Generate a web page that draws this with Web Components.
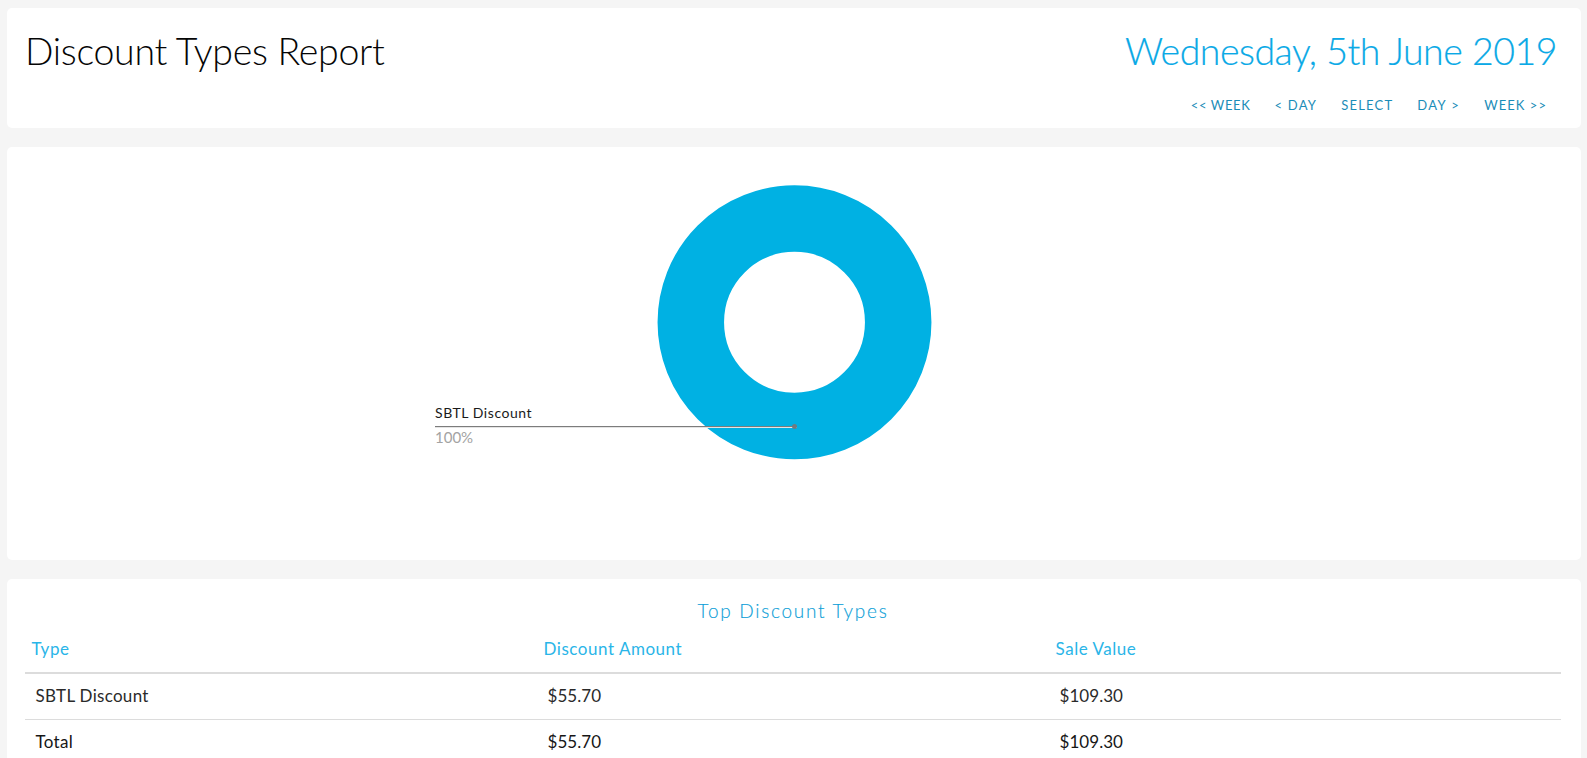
<!DOCTYPE html>
<html lang="en"><head><meta charset="utf-8"><title>Discount Types Report</title>
<style>
html,body{margin:0;height:100%;overflow:hidden;background:#f5f5f5}
body{font-family:Lato,"Liberation Sans",sans-serif;color:#111;box-sizing:border-box;padding:8px 6px 0 7px}
</style></head><body>
<report-page>
  <report-card style="height:120px">
    <report-header title-text="Discount Types Report" date-text="Wednesday, 5th June 2019">
      <nav-link style="letter-spacing:.62px">&lt;&lt; WEEK</nav-link><nav-link style="letter-spacing:1.25px">&lt; DAY</nav-link><nav-link style="letter-spacing:1.2px">SELECT</nav-link><nav-link style="letter-spacing:1.4px">DAY &gt;</nav-link><nav-link>WEEK &gt;&gt;</nav-link>
    </report-header>
  </report-card>
  <report-card style="height:413px"><donut-chart label="SBTL Discount" pct="100%"></donut-chart></report-card>
  <report-card><discount-table></discount-table></report-card>
</report-page>
<script>
function def(name,html,init){customElements.define(name,class extends HTMLElement{
  constructor(){super();this.attachShadow({mode:'open'}).innerHTML=html;}
  connectedCallback(){if(init)init(this);}
});}
def('report-page',`<style>:host{display:flex;flex-direction:column;gap:19px}</style><slot></slot>`);
def('report-card',`<style>:host{display:block;background:#fff;border-radius:5px;box-sizing:border-box;flex:none}</style><slot></slot>`);
def('nav-link',`<style>:host{display:block;font-size:13px;letter-spacing:1.03px;color:#1b8db8;white-space:nowrap;line-height:16px}</style><slot></slot>`);
def('report-header',`<style>
:host{display:flex;justify-content:space-between;align-items:flex-start;height:100%;padding:0 24px 0 19px;box-sizing:border-box}
h1{margin:21px 0 0 -1px;font-size:37.5px;line-height:44px;font-weight:300;color:#050505;letter-spacing:-.3px;white-space:nowrap}
.r{display:flex;flex-direction:column;align-items:flex-end}
.d{margin-top:21px;font-size:37.5px;line-height:44px;font-weight:300;color:#0aa9e6;letter-spacing:-.5px;white-space:nowrap;-webkit-text-stroke:.2px #0aa9e6}
nav{display:flex;gap:24px;margin-top:24px;padding-right:10px}
</style><h1></h1><div class="r"><div class="d"></div><nav><slot></slot></nav></div>`,el=>{
  el.shadowRoot.querySelector('h1').textContent=el.getAttribute('title-text');
  el.shadowRoot.querySelector('.d').textContent=el.getAttribute('date-text');
});
def('donut-chart',`<style>
:host{display:block;position:relative;height:100%}
svg{display:block;width:100%;height:100%}
.l{position:absolute;left:428px;top:257px;width:360px;font-size:14px;line-height:18px}
.a{color:#1a1a1a;height:24px;letter-spacing:.55px}
.b{color:#a3a3a3;font-size:15px}
.line{position:absolute;left:428px;top:279px;width:362px;height:1px;background:#7c7c7c;box-shadow:0 1px 0 #e4e4e4}
.dot{position:absolute;left:785px;top:277px;width:5px;height:5px;border-radius:50%;background:#6f7a80}
</style>
<svg viewBox="0 0 1574 413" aria-hidden="true"><circle cx="787.5" cy="175.3" r="103.7" fill="none" stroke="#00b1e3" stroke-width="66.5"/></svg>
<div class="l"><div class="a"></div><div class="b"></div></div><div class="line"></div><div class="dot"></div>`,el=>{
  el.shadowRoot.querySelector('.a').textContent=el.getAttribute('label');
  el.shadowRoot.querySelector('.b').textContent=el.getAttribute('pct');
});
def('discount-table',`<style>
:host{display:block;padding:0 20px 0 18px}
h2{margin:0;padding-top:20px;text-align:center;font-size:19px;line-height:24px;font-weight:300;color:#0f9fd8;letter-spacing:1.72px;-webkit-text-stroke:.15px #0f9fd8}
table{width:100%;border-collapse:collapse;table-layout:fixed;font-size:17px}
th{font-weight:400;color:#2ab5e8;text-align:left;padding:2px 0 0 6.5px;height:50px;border-bottom:2px solid #dcdcdc;box-sizing:border-box;letter-spacing:.54px}
td{padding:0 0 2px 10.5px;height:46px;border-bottom:1px solid #dcdcdc;box-sizing:border-box;color:#2a2a2a;letter-spacing:.3px}
td+td{letter-spacing:.05px}
tr.t td{color:#161616}
</style><h2>Top Discount Types</h2>
<table><thead><tr><th>Type</th><th>Discount Amount</th><th>Sale Value</th></tr></thead>
<tbody><tr><td>SBTL Discount</td><td>$55.70</td><td>$109.30</td></tr><tr class="t"><td>Total</td><td>$55.70</td><td>$109.30</td></tr></tbody></table>`);
</script>
</body></html>
